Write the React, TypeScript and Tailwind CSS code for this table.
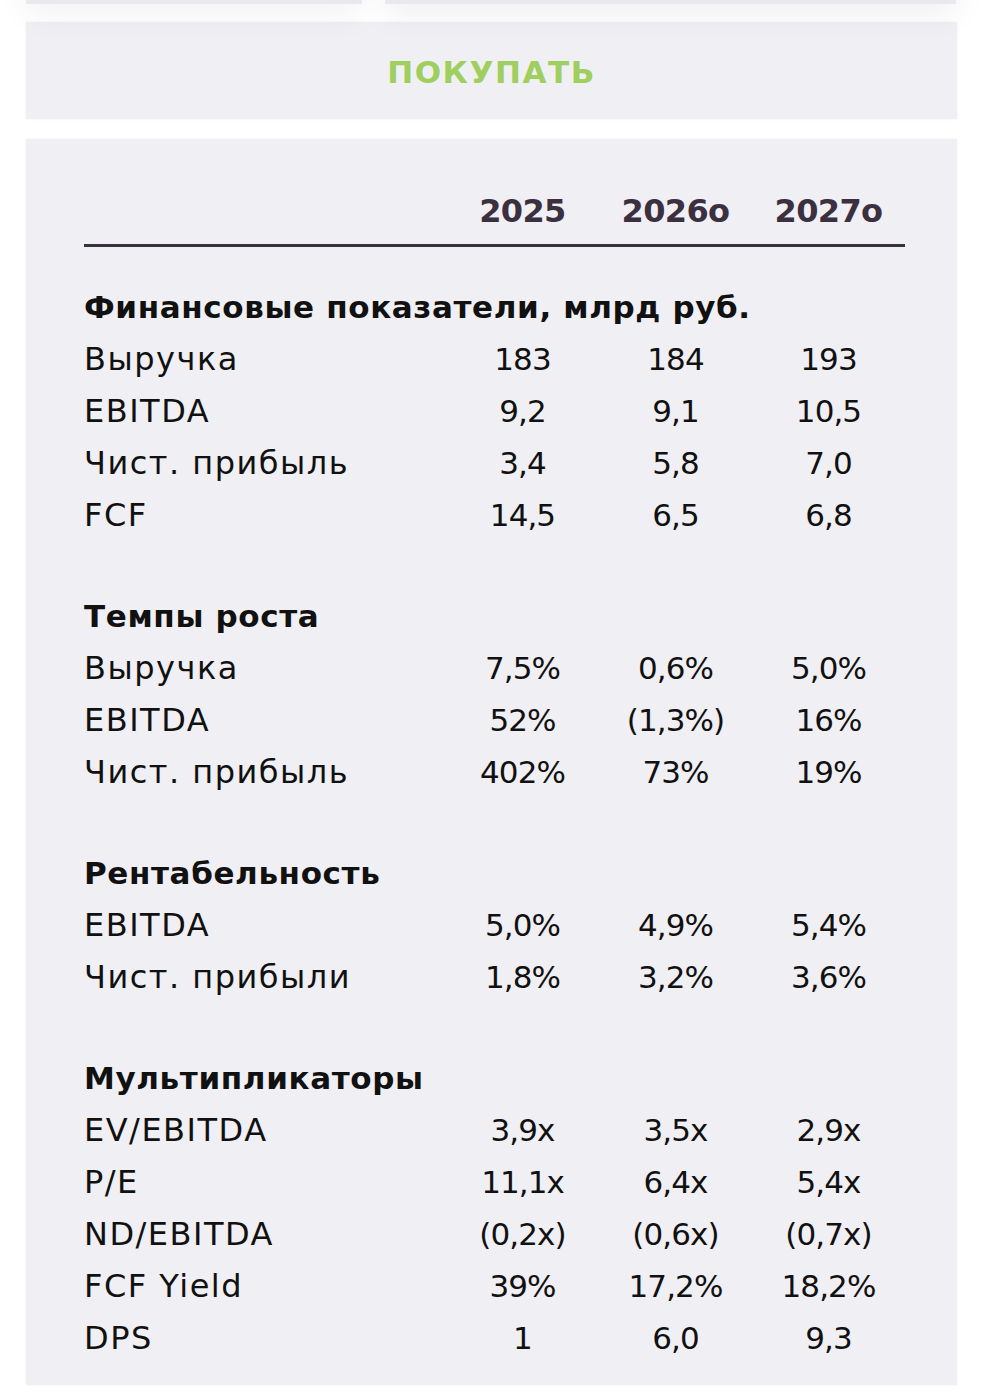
import React from "react";

type Row = { label: string; v: [string, string, string] };
type Section = { title: string; rows: Row[] };

const sections: Section[] = [
  {
    title: "Финансовые показатели, млрд руб.",
    rows: [
      { label: "Выручка", v: ["183", "184", "193"] },
      { label: "EBITDA", v: ["9,2", "9,1", "10,5"] },
      { label: "Чист. прибыль", v: ["3,4", "5,8", "7,0"] },
      { label: "FCF", v: ["14,5", "6,5", "6,8"] },
    ],
  },
  {
    title: "Темпы роста",
    rows: [
      { label: "Выручка", v: ["7,5%", "0,6%", "5,0%"] },
      { label: "EBITDA", v: ["52%", "(1,3%)", "16%"] },
      { label: "Чист. прибыль", v: ["402%", "73%", "19%"] },
    ],
  },
  {
    title: "Рентабельность",
    rows: [
      { label: "EBITDA", v: ["5,0%", "4,9%", "5,4%"] },
      { label: "Чист. прибыли", v: ["1,8%", "3,2%", "3,6%"] },
    ],
  },
  {
    title: "Мультипликаторы",
    rows: [
      { label: "EV/EBITDA", v: ["3,9x", "3,5x", "2,9x"] },
      { label: "P/E", v: ["11,1x", "6,4x", "5,4x"] },
      { label: "ND/EBITDA", v: ["(0,2x)", "(0,6x)", "(0,7x)"] },
      { label: "FCF Yield", v: ["39%", "17,2%", "18,2%"] },
      { label: "DPS", v: ["1", "6,0", "9,3"] },
    ],
  },
];

export default function App() {
  return (
    <div className="min-h-[1396px] w-[986px] bg-white font-['DejaVu_Sans',sans-serif] text-[#111111] overflow-hidden">
      {/* top strip of previous cards */}
      <div className="flex gap-[23px] pl-[26px] pr-[30px] -mt-[96px]">
        <div className="h-[100px] w-[336px] bg-[#e9e8ed] shadow-[0_12px_30px_rgba(0,0,0,0.05)]" />
        <div className="h-[100px] flex-1 bg-[#e9e8ed] shadow-[0_12px_30px_rgba(0,0,0,0.06)]" />
      </div>

      {/* ПОКУПАТЬ card */}
      <div className="ml-[26px] mr-[29px] mt-[18px] h-[97px] bg-[#f0eff4] shadow-[0_0_3px_rgba(0,0,0,0.06)] flex items-center justify-center">
        <span className="text-[31px] font-bold tracking-[0.05em] text-[#9ecf5f] leading-none pt-[3px]">
          ПОКУПАТЬ
        </span>
      </div>

      {/* table card */}
      <div className="ml-[26px] mr-[29px] mt-[20px] bg-[#f0eff4] shadow-[0_0_3px_rgba(0,0,0,0.06)] pl-[58px] pr-[52px] pt-[52px] pb-[21px]">
        <div className="grid grid-cols-[1fr_153px_153px_153px] h-[40px] leading-[40px] text-[32px] font-bold text-[#3a303f] tracking-[-0.02em]">
          <div />
          <div className="text-center">2025</div>
          <div className="text-center">2026о</div>
          <div className="text-center">2027о</div>
        </div>
        <div className="mt-[13px] h-[3px] bg-[#3a303f]" />
        <div className="mt-[34px]">
          {sections.map((s, i) => (
            <div key={s.title} className={i === 0 ? "" : "mt-[49px]"}>
              <div className="h-[52px] leading-[52px] text-[31px] font-bold whitespace-nowrap tracking-[0.02em]">
                {s.title}
              </div>
              {s.rows.map((r) => (
                <div
                  key={r.label}
                  className="grid grid-cols-[1fr_153px_153px_153px] h-[52px] leading-[52px] text-[31px]"
                >
                  <div className="whitespace-nowrap text-[32px] tracking-[1.5px]">{r.label}</div>
                  {r.v.map((v, j) => (
                    <div key={j} className="text-center whitespace-nowrap tracking-[-0.03em]">
                      {v}
                    </div>
                  ))}
                </div>
              ))}
            </div>
          ))}
        </div>
      </div>
    </div>
  );
}
